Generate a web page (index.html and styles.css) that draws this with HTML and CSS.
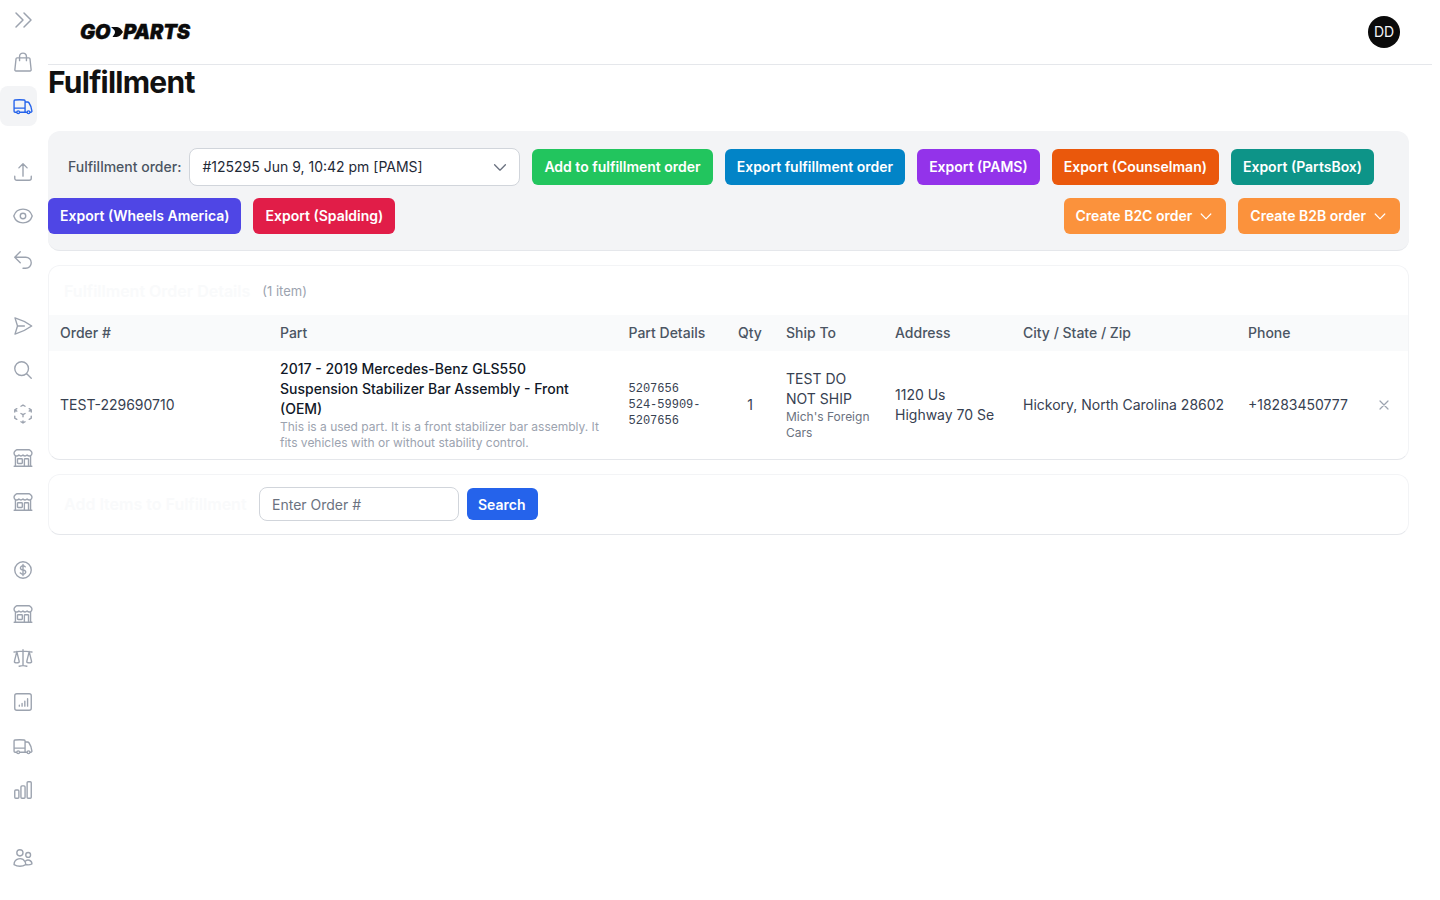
FILE: index.html
```html
<!DOCTYPE html>
<html lang="en">
<head>
    <meta charset="UTF-8">
    <meta name="viewport" content="width=device-width, initial-scale=1.0">
    <title>Fulfillment</title>
    <link rel="stylesheet" href="styles.css">
</head>
<body>
    <svg class="sprite" xmlns="http://www.w3.org/2000/svg">
        <symbol id="i-chevrons" viewBox="0 0 24 24"><path d="M13 5l7 7-7 7M5 5l7 7-7 7"/></symbol>
        <symbol id="i-bag" viewBox="0 0 24 24"><path d="M15.75 10.5V6a3.75 3.75 0 10-7.5 0v4.5m11.356-1.993l1.263 12c.07.665-.45 1.243-1.119 1.243H4.25a1.125 1.125 0 01-1.12-1.243l1.264-12A1.125 1.125 0 015.513 7.5h12.974c.576 0 1.059.435 1.119 1.007z"/></symbol>
        <symbol id="i-truck" viewBox="0 0 24 24"><path d="M8.25 18.75a1.5 1.5 0 01-3 0m3 0a1.5 1.5 0 00-3 0m3 0h6m-9 0H3.375a1.125 1.125 0 01-1.125-1.125V14.25m17.25 4.5a1.5 1.5 0 01-3 0m3 0a1.5 1.5 0 00-3 0m3 0h1.125c.621 0 1.129-.504 1.09-1.124a17.902 17.902 0 00-3.213-9.193 2.056 2.056 0 00-1.58-.86H14.25M16.5 18.75h-2.25m0-11.177v-.958c0-.568-.422-1.048-.987-1.106a48.554 48.554 0 00-10.026 0 1.106 1.106 0 00-.987 1.106v7.635m12-6.677v6.677m0 4.5v-4.5m0 0h-12"/></symbol>
        <symbol id="i-upload" viewBox="0 0 24 24"><path d="M3 16.5v2.25A2.25 2.25 0 005.25 21h13.5A2.25 2.25 0 0021 18.75V16.5m-13.5-9L12 3m0 0l4.5 4.5M12 3v13.5"/></symbol>
        <symbol id="i-eye" viewBox="0 0 24 24"><path d="M2.036 12.322a1.012 1.012 0 010-.639C3.423 7.51 7.36 4.5 12 4.5c4.638 0 8.573 3.007 9.963 7.178.07.207.07.431 0 .639C20.577 16.49 16.64 19.5 12 19.5c-4.638 0-8.573-3.007-9.963-7.178z"/><path d="M15 12a3 3 0 11-6 0 3 3 0 016 0z"/></symbol>
        <symbol id="i-back" viewBox="0 0 24 24"><path d="M9 15L3 9m0 0l6-6M3 9h12a6 6 0 010 12h-3"/></symbol>
        <symbol id="i-send" viewBox="0 0 24 24"><path d="M6 12L3.269 3.126A59.768 59.768 0 0121.485 12 59.77 59.77 0 013.27 20.876L5.999 12zm0 0h7.5"/></symbol>
        <symbol id="i-search" viewBox="0 0 24 24"><path d="M21 21l-5.197-5.197m0 0A7.5 7.5 0 105.196 5.196a7.5 7.5 0 0010.607 10.607z"/></symbol>
        <symbol id="i-cube" viewBox="0 0 24 24"><path d="M21 7.5l-2.25-1.313M21 7.5v2.25m0-2.25l-2.25 1.313M3 7.5l2.25-1.313M3 7.5l2.25 1.313M3 7.5v2.25m9 3l2.25-1.313M12 12.75l-2.25-1.313M12 12.75V15m0 6.75l2.25-1.313M12 21.75V19.5m0 2.25l-2.25-1.313m0-16.875L12 2.25l2.25 1.313M21 14.25v2.25l-2.25 1.313m-13.5 0L3 16.5v-2.25"/></symbol>
        <symbol id="i-store" viewBox="0 0 24 24"><path d="M13.5 21v-7.5a.75.75 0 01.75-.75h3a.75.75 0 01.75.75V21m-4.5 0H2.36m11.14 0H18m0 0h3.64m-1.39 0V9.349m-16.5 11.65V9.35m0 0a3.001 3.001 0 003.75-.615A2.993 2.993 0 009.75 9.75c.896 0 1.7-.393 2.25-1.016a2.993 2.993 0 002.25 1.016c.896 0 1.7-.393 2.25-1.016a3.001 3.001 0 003.75.614m-16.5 0a3.004 3.004 0 01-.621-4.72L4.318 3.44A1.5 1.5 0 015.378 3h13.243a1.5 1.5 0 011.06.44l1.19 1.189a3 3 0 01-.621 4.72m-13.5 8.65h3.75a.75.75 0 00.75-.75V13.5a.75.75 0 00-.75-.75H6.75a.75.75 0 00-.75.75v3.75c0 .415.336.75.75.75z"/></symbol>
        <symbol id="i-dollar" viewBox="0 0 24 24"><path d="M12 6v12m-3-2.818l.879.659c1.171.879 3.07.879 4.242 0 1.172-.879 1.172-2.303 0-3.182C13.536 12.219 12.768 12 12 12c-.725 0-1.45-.22-2.003-.659-1.106-.879-1.106-2.303 0-3.182s2.9-.879 4.006 0l.415.33M21 12a9 9 0 11-18 0 9 9 0 0118 0z"/></symbol>
        <symbol id="i-scale" viewBox="0 0 24 24"><path d="M12 3v17.25m0 0c-1.472 0-2.882.265-4.185.75M12 20.25c1.472 0 2.882.265 4.185.75M18.75 4.97A48.416 48.416 0 0012 4.5c-2.291 0-4.545.16-6.75.47m13.5 0c1.01.143 2.01.317 3 .52m-3-.52l2.62 10.726c.122.499-.106 1.028-.589 1.202a5.988 5.988 0 01-2.031.352 5.988 5.988 0 01-2.031-.352c-.483-.174-.711-.703-.59-1.202L18.75 4.971zm-16.5.52c.99-.203 1.99-.377 3-.52m0 0l2.62 10.726c.122.499-.106 1.028-.589 1.202a5.989 5.989 0 01-2.031.352 5.989 5.989 0 01-2.031-.352c-.483-.174-.711-.703-.59-1.202L5.25 4.971z"/></symbol>
        <symbol id="i-report" viewBox="0 0 24 24"><rect x="3" y="3" width="18" height="18" rx="2.25"/><path d="M8 16.5v-1M11 16.5v-3M14 16.5v-5.5M17 16.5v-8"/></symbol>
        <symbol id="i-bars" viewBox="0 0 24 24"><path d="M3 13.125C3 12.504 3.504 12 4.125 12h2.25c.621 0 1.125.504 1.125 1.125v6.75C7.5 20.496 6.996 21 6.375 21h-2.25A1.125 1.125 0 013 19.875v-6.75zM9.75 8.625c0-.621.504-1.125 1.125-1.125h2.25c.621 0 1.125.504 1.125 1.125v11.25c0 .621-.504 1.125-1.125 1.125h-2.25a1.125 1.125 0 01-1.125-1.125V8.625zM16.5 4.125c0-.621.504-1.125 1.125-1.125h2.25C20.496 3 21 3.504 21 4.125v15.75c0 .621-.504 1.125-1.125 1.125h-2.25a1.125 1.125 0 01-1.125-1.125V4.125z"/></symbol>
        <symbol id="i-users" viewBox="0 0 24 24"><path d="M15 19.128a9.38 9.38 0 002.625.372 9.337 9.337 0 004.121-.952 4.125 4.125 0 00-7.533-2.493M15 19.128v-.003c0-1.113-.285-2.16-.786-3.07M15 19.128v.106A12.318 12.318 0 018.624 21c-2.331 0-4.512-.645-6.374-1.766l-.001-.109a6.375 6.375 0 0111.964-3.07M12 6.375a3.375 3.375 0 11-6.75 0 3.375 3.375 0 016.75 0zm8.25 2.25a2.625 2.625 0 11-5.25 0 2.625 2.625 0 015.25 0z"/></symbol>
    </svg>

    <div class="shell">
        <nav class="sidebar">
            <a class="nav-toggle"><svg class="icon icon-toggle"><use href="#i-chevrons"/></svg></a>
            <div class="nav-group">
                <a class="nav-item"><svg class="icon"><use href="#i-bag"/></svg></a>
                <a class="nav-item active"><svg class="icon"><use href="#i-truck"/></svg></a>
            </div>
            <div class="nav-group">
                <a class="nav-item"><svg class="icon"><use href="#i-upload"/></svg></a>
                <a class="nav-item"><svg class="icon"><use href="#i-eye"/></svg></a>
                <a class="nav-item"><svg class="icon"><use href="#i-back"/></svg></a>
            </div>
            <div class="nav-group">
                <a class="nav-item"><svg class="icon"><use href="#i-send"/></svg></a>
                <a class="nav-item"><svg class="icon"><use href="#i-search"/></svg></a>
                <a class="nav-item"><svg class="icon"><use href="#i-cube"/></svg></a>
                <a class="nav-item"><svg class="icon"><use href="#i-store"/></svg></a>
                <a class="nav-item"><svg class="icon"><use href="#i-store"/></svg></a>
            </div>
            <div class="nav-group wide">
                <a class="nav-item"><svg class="icon"><use href="#i-dollar"/></svg></a>
                <a class="nav-item"><svg class="icon"><use href="#i-store"/></svg></a>
                <a class="nav-item"><svg class="icon"><use href="#i-scale"/></svg></a>
                <a class="nav-item"><svg class="icon"><use href="#i-report"/></svg></a>
                <a class="nav-item"><svg class="icon"><use href="#i-truck"/></svg></a>
                <a class="nav-item"><svg class="icon"><use href="#i-bars"/></svg></a>
            </div>
            <div class="nav-group wide">
                <a class="nav-item"><svg class="icon"><use href="#i-users"/></svg></a>
            </div>
        </nav>

        <div class="page">
            <header class="topbar">
                <div class="logo">
                    <span>GO</span>
                    <svg class="logo-mark" viewBox="0 0 12 12"><path d="M0 1h6c2.500 0 4.500 2.500 6 5-1.500 2.500-4 5-6.500 5H1.500c1.500-2 2.500-3.500 2.500-5S2.500 3 0 1z"/></svg>
                    <span>PARTS</span>
                </div>
                <div class="avatar">DD</div>
            </header>

            <main class="content">
                <h1>Fulfillment</h1>

                <section class="toolbar">
                    <div class="order-field">
                        <label class="order-label">Fulfillment order:</label>
                        <div class="select">
                            <span>#125295 Jun 9, 10:42 pm [PAMS]</span>
                            <svg class="chevron" viewBox="0 0 20 20"><path d="M4 7.500l6 6 6-6"/></svg>
                        </div>
                    </div>
                    <button class="btn green">Add to fulfillment order</button>
                    <button class="btn sky">Export fulfillment order</button>
                    <button class="btn purple">Export (PAMS)</button>
                    <button class="btn orange">Export (Counselman)</button>
                    <button class="btn teal">Export (PartsBox)</button>
                    <button class="btn indigo">Export (Wheels America)</button>
                    <button class="btn rose">Export (Spalding)</button>
                    <button class="btn amber push">Create B2C order <svg class="chevron" viewBox="0 0 20 20"><path d="M4 7.500l6 6 6-6"/></svg></button>
                    <button class="btn amber">Create B2B order <svg class="chevron" viewBox="0 0 20 20"><path d="M4 7.500l6 6 6-6"/></svg></button>
                </section>

                <section class="card">
                    <div class="card-title">
                        <h2>Fulfillment Order Details</h2>
                        <span class="count">(1 item)</span>
                    </div>
                    <table class="items">
                        <colgroup>
                            <col class="c-order"><col class="c-part"><col class="c-details"><col class="c-qty">
                            <col class="c-ship"><col class="c-address"><col class="c-city"><col class="c-phone"><col>
                        </colgroup>
                        <thead>
                            <tr>
                                <th>Order #</th>
                                <th>Part</th>
                                <th>Part Details</th>
                                <th>Qty</th>
                                <th>Ship To</th>
                                <th>Address</th>
                                <th>City / State / Zip</th>
                                <th>Phone</th>
                                <th></th>
                            </tr>
                        </thead>
                        <tbody>
                            <tr>
                                <td>TEST-229690710</td>
                                <td>
                                    <div class="part-name">2017 - 2019 Mercedes-Benz GLS550 Suspension Stabilizer Bar Assembly - Front (OEM)</div>
                                    <div class="part-note">This is a used part. It is a front stabilizer bar assembly. It fits vehicles with or without stability control.</div>
                                </td>
                                <td class="mono">
                                    <div class="mono-main">5207656</div>
                                    <div>524-59909-5207656</div>
                                </td>
                                <td class="qty">1</td>
                                <td>
                                    <div>TEST DO NOT SHIP</div>
                                    <div class="ship-note">Mich's Foreign Cars</div>
                                </td>
                                <td>1120 Us Highway 70 Se</td>
                                <td>Hickory, North Carolina 28602</td>
                                <td>+18283450777</td>
                                <td class="remove">
                                    <svg viewBox="0 0 20 20"><path d="M5 5l10 10M15 5L5 15"/></svg>
                                </td>
                            </tr>
                        </tbody>
                    </table>
                </section>

                <section class="card add-card">
                    <h2>Add Items to Fulfillment</h2>
                    <input class="order-input" type="text" placeholder="Enter Order #">
                    <button class="btn blue">Search</button>
                </section>
            </main>
        </div>
    </div>
</body>
</html>
```

FILE: styles.css
```css
* {
    margin: 0;
    padding: 0;
    box-sizing: border-box;
}

body {
    background: #fff;
    color: #374151;
    font-family: Inter, "Noto Sans", sans-serif;
    font-size: 14px;
    line-height: 20px;
    min-height: 100vh;
    overflow: hidden;
}

.sprite {
    display: none;
}

.shell {
    display: flex;
    padding-right: 8px;
}

/* sidebar */
.sidebar {
    width: 48px;
    flex-shrink: 0;
}

.nav-toggle,
.nav-item {
    display: flex;
    align-items: center;
    width: 37px;
    height: 40px;
    padding-left: 11.5px;
    border-radius: 8px;
    color: #9ca3af;
}

.nav-toggle {
    padding-left: 11px;
    margin-bottom: 2px;
}

.nav-item.active {
    background: #f3f4f6;
    color: #2563eb;
}

.nav-group {
    display: flex;
    flex-direction: column;
    gap: 4px;
}

.nav-group + .nav-group {
    margin-top: 26px;
}

.nav-group.wide {
    margin-top: 28px;
}

.icon {
    width: 22px;
    height: 22px;
    fill: none;
    stroke: currentColor;
    stroke-width: 1.5;
    stroke-linecap: round;
    stroke-linejoin: round;
    flex-shrink: 0;
}

.icon-toggle {
    width: 24px;
    height: 24px;
}

/* header */
.page {
    flex: 1;
    min-width: 0;
}

.topbar {
    display: flex;
    align-items: center;
    justify-content: space-between;
    height: 65px;
    padding: 0 32px;
    border-bottom: 1px solid #e5e7eb;
}

.logo {
    display: flex;
    align-items: center;
    color: #0b0b0b;
    font-size: 20px;
    font-weight: 900;
    font-style: italic;
    letter-spacing: -0.2px;
    -webkit-text-stroke: 0.4px #0b0b0b;
}

.logo-mark {
    width: 12px;
    height: 12px;
    margin: 0 0 0 1px;
    fill: #0b0b0b;
}

.avatar {
    display: flex;
    align-items: center;
    justify-content: center;
    width: 32px;
    height: 32px;
    border-radius: 50%;
    background: #0a0a0a;
    color: #f3f4f6;
    font-size: 14px;
}

/* content */
.content {
    padding-right: 23px;
}

h1 {
    color: #111;
    font-size: 30px;
    line-height: 34px;
    font-weight: 700;
    letter-spacing: -0.75px;
    margin-bottom: 32px;
}

.toolbar {
    display: flex;
    flex-wrap: wrap;
    align-items: center;
    gap: 12px;
    padding: 17px 9px 16px 0;
    background: #f3f4f6;
    border-bottom: 1px solid #e5e7eb;
    border-radius: 12px;
}

.order-field {
    display: flex;
    align-items: center;
    gap: 8px;
    padding-left: 20px;
}

.order-label {
    color: #4b5563;
    font-weight: 500;
}

.select {
    display: flex;
    align-items: center;
    justify-content: space-between;
    width: 331px;
    height: 38px;
    padding: 0 12px;
    background: #fff;
    border: 1px solid #d1d5db;
    border-radius: 8px;
    color: #1f2937;
}

.select .chevron {
    color: #6b7280;
    margin-right: -2px;
}

.chevron {
    width: 18px;
    height: 18px;
    fill: none;
    stroke: currentColor;
    stroke-width: 1.5;
    stroke-linecap: round;
    stroke-linejoin: round;
}

.btn {
    display: inline-flex;
    align-items: center;
    gap: 6px;
    height: 36px;
    padding: 0 12px 2px;
    border: 0;
    border-radius: 6px;
    color: #fff;
    font-family: inherit;
    font-size: 14px;
    font-weight: 600;
    white-space: nowrap;
}

.btn .chevron {
    width: 16px;
    height: 16px;
    margin-top: 2px;
}

.green { background: #22c55e; }
.sky { background: #0284c7; }
.purple { background: #9333ea; }
.orange { background: #ea580c; }
.teal { background: #0d9488; }
.indigo { background: #4f46e5; }
.rose { background: #e11d48; }
.amber { background: #fb923c; }
.blue { background: #2563eb; height: 32px; padding-left: 11px; padding-bottom: 0; }

.push {
    margin-left: auto;
}

.card {
    margin-top: 14px;
    border: 1px solid #f3f4f6;
    border-bottom-color: #e5e7eb;
    border-radius: 12px;
    overflow: hidden;
}

h2 {
    color: #f9fafb;
    font-size: 16px;
    line-height: 24px;
    font-weight: 600;
}

.card-title {
    display: flex;
    align-items: center;
    gap: 12px;
    height: 49px;
    padding: 1px 15px 0;
}

.count {
    color: #9ca3af;
    font-size: 13px;
}

.items {
    width: 100%;
    table-layout: fixed;
    border-collapse: collapse;
}

.c-order { width: 220px; }
.c-part { width: 348.5px; }
.c-details { width: 109.5px; }
.c-qty { width: 48px; }
.c-ship { width: 109px; }
.c-address { width: 128px; }
.c-city { width: 225px; }
.c-phone { width: 124px; }

.items th {
    height: 36px;
    padding: 0 11px;
    background: #f9fafb;
    color: #4b5563;
    font-weight: 500;
    text-align: left;
}

.items td {
    height: 108px;
    padding: 8px 11px;
    color: #374151;
    vertical-align: middle;
}

.part-name {
    color: #111827;
    font-weight: 500;
}

.part-note {
    color: #9ca3af;
    font-size: 12px;
    line-height: 16px;
}

.mono {
    color: #6b7280;
    font-family: "Liberation Mono", monospace;
    font-size: 12px;
    line-height: 16px;
}

.mono-main {
    color: #374151;
}

.items .qty {
    padding: 8px 12px 8px 10px;
    text-align: center;
}

.ship-note {
    color: #6b7280;
    font-size: 12px;
    line-height: 16px;
}

.remove svg {
    display: block;
    width: 16px;
    height: 16px;
    margin-left: 4px;
    fill: none;
    stroke: #9ca3af;
    stroke-width: 1.5;
    stroke-linecap: round;
}

.add-card {
    display: flex;
    align-items: center;
    gap: 8px;
    height: 61px;
    padding: 0 15px 1px;
}

.add-card h2 {
    width: 187px;
}

.order-input {
    width: 200px;
    height: 34px;
    padding: 0 12px;
    border: 1px solid #d1d5db;
    border-radius: 8px;
    color: #374151;
    font-family: inherit;
    font-size: 14px;
}

.order-input::placeholder {
    color: #6b7280;
}
```
